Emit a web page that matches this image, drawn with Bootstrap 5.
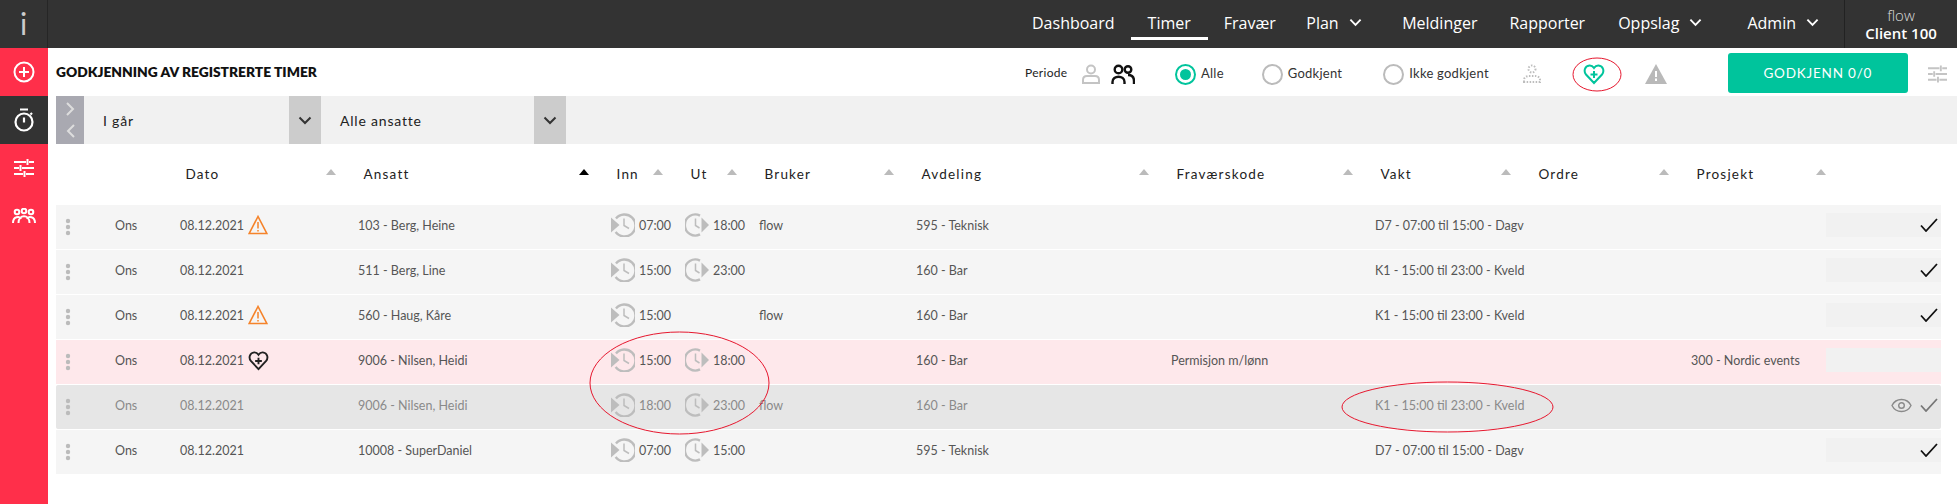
<!DOCTYPE html>
<html lang="no">
<head>
<meta charset="utf-8">
<title>Godkjenning</title>
<link href="https://cdn.jsdelivr.net/npm/bootstrap@5.3.0/dist/css/bootstrap.min.css" rel="stylesheet">
<style>
html,body{height:100%;overflow:hidden}
body{font-family:"Lato","Liberation Sans",sans-serif;font-size:13px;color:#555;background:#fff}
.topbar{height:48px;background:#333}
.logo-box{width:48px;border-right:1px solid #262626;color:#ccc;font-size:30px;font-weight:400;line-height:46px;text-align:center}
.menu-link{display:flex;align-items:center;height:40px;padding:5px 14px 0;color:#fff;font-family:"Open Sans",sans-serif;font-size:16px;text-decoration:none;white-space:nowrap}
.menu-link.wide-link{padding-left:16px;padding-right:16px}
.menu-link.active-link{border-bottom:3px solid #fff;padding:8px 17px 0;margin:0 2px 0 0}
.menu-link.fra-link{padding-right:16.5px}
.menu-link.plan-link{padding-right:24.5px}
.menu-link.rap-link{padding-right:19px}
.menu-link.opp-link{padding-right:31px}
.menu-link.last-sub{padding-right:25px}
.menu-link svg{margin-left:10px}
.client-box{width:113px;border-left:1px solid #222;color:#fff;font-family:"Open Sans",sans-serif;text-align:center;line-height:18px;font-size:15px;padding-top:6px}
.client-box .flow-name{font-weight:300;color:#ddd}
.client-box .client-name{font-weight:600;white-space:nowrap}
.body-wrap{height:456px}
.sidenav{width:48px;background:#ff2f4a}
.side-item{height:48px;display:flex;align-items:center;justify-content:center}
.side-item.current{background:#333}
.main-area{width:1909px;padding-left:8px}
.tool-row{height:48px}
.tool-row>:not(.page-title){margin-top:4px}
.tool-row>.btn-approve,.tool-row>.periode{margin-top:2px}
.page-title{font-size:13.8px;font-weight:800;color:#111;width:969px;margin:0;white-space:nowrap}
.periode{font-size:12px;color:#222;width:57px;letter-spacing:.3px}
.tool-radio{display:flex;align-items:center;font-size:13px;color:#333;letter-spacing:.25px}
.radio-mark{width:21px;height:21px;border-radius:50%;border:2px solid #bbb;margin-right:5px;background:#fff}
.radio-mark.on{border-color:#00c49c;position:relative}
.radio-mark.on::after{content:"";position:absolute;inset:3px;border-radius:50%;background:#00c49c}
.ms-alle{margin-left:40px}.ms-god{margin-left:38px}.ms-ikke{margin-left:41px}
.ms-dot{margin-left:34px}.ms-heart{margin-left:42px}.ms-tri{margin-left:40px}
.ms-btn{margin-left:61px}.ms-sl{margin-left:20px}
.ms-grp{margin-left:11px}
.btn-approve{width:180px;height:40px;background:#00c49c;border:0;border-radius:3px;color:#fff;font-size:13.5px;font-weight:400;letter-spacing:.8px;padding:0}
.btn-approve:hover{background:#00c49c;color:#fff}
.filter-row{height:48px;background:#f1f1f1}
.pager{width:28px;background:#a9a9b1}
.sel-text{display:flex;align-items:center;color:#222;font-size:14px;letter-spacing:.8px}
.sel-a{width:205px;padding-left:19px}.sel-b{width:213px;padding-left:19px}
.sel-arrow{width:32px;background:#ccc;display:flex;align-items:center;justify-content:center}
.grid-row{display:grid;grid-template-columns:59px 65px 178px 253px 74px 74px 157px 255px 204px 158px 158px 135px 115px;width:1885px;align-items:center}
.head-row{height:61px;color:#222;font-size:13.5px;letter-spacing:1.2px}
.head-cell{display:flex;justify-content:space-between;padding-left:5.5px;padding-right:22px;align-items:center}
.head-cell.no-pad{padding-right:0}
.tri{width:0;height:0;border-left:5px solid transparent;border-right:5px solid transparent;border-bottom:6px solid #bbb;margin-bottom:6px;flex:none}
.tri.on{border-bottom-color:#000}
.data-row{height:44px;margin-bottom:1px;background:#f5f5f5;padding-bottom:4px;font-size:12.5px;white-space:nowrap}
.data-row>div{padding-top:2px}
.data-row.pink{background:#fee8eb}
.data-row.dim{background:#e6e6e6;color:#8a8a8a;border-radius:2px}
.data-row>.handle{padding-left:9px;padding-top:4px;display:flex}
.date-cell{display:flex;align-items:center;gap:4px}
.time-cell{display:flex;align-items:center;gap:4px}
.date-cell svg,.time-cell svg{margin-top:-2px}
.data-row>.act-cell{height:24px;padding-top:0;background:#f1f1f1;display:flex;align-items:center;justify-content:flex-end;padding-right:3px}
.data-row>.act-cell.bare{background:transparent;gap:8px}
.draw-layer{position:absolute;left:0;top:0;width:1957px;height:504px;pointer-events:none}
</style>
</head>
<body>
<svg class="d-none">
<symbol id="ic-in" viewBox="0 0 24 24"><path d="M5 5.500A11 11 0 1 1 4.600 19" fill="none" stroke="#bdbdbd" stroke-width="2.400"/><path d="M0 4.500 8.500 12 0 19.500z" fill="#bdbdbd"/><path d="M13 5.500v7l5 3" fill="none" stroke="#bdbdbd" stroke-width="1.500"/></symbol>
<symbol id="ic-out" viewBox="0 0 24 24"><path d="M15 2.600A10.500 10.500 0 1 0 15 21.400" fill="none" stroke="#bdbdbd" stroke-width="2.400"/><path d="M16.500 4.500 24 12l-7.500 7.500z" fill="#bdbdbd"/><path d="M10.500 5.500v7l4 2.500" fill="none" stroke="#bdbdbd" stroke-width="1.500"/></symbol>
<symbol id="ic-warn" viewBox="0 0 20 20"><path d="M10 1.500 1.200 18.500h17.600z" fill="none" stroke="#f5832a" stroke-width="1.600"/><path d="M10 7v6.500M10 15v1.500" stroke="#f5832a" stroke-width="1.500"/></symbol>
<symbol id="ic-dots" viewBox="0 0 6 18"><circle cx="3" cy="3" r="2.200" fill="#bbb"/><circle cx="3" cy="9" r="2.200" fill="#bbb"/><circle cx="3" cy="15" r="2.200" fill="#bbb"/></symbol>
<symbol id="ic-check" viewBox="0 0 18 14"><path d="M1 7.500 6 13 17 1" fill="none" stroke="#111" stroke-width="1.800"/></symbol>
<symbol id="ic-chev" viewBox="0 0 14 9"><path d="M1.500 1.500 7 7l5.500-5.500" fill="none" stroke="currentColor" stroke-width="2"/></symbol>
<symbol id="ic-heart" viewBox="0 0 22 22"><path d="M11 20 3 11.500C.5 8.500 1.500 3 6.500 2.500 8.500 2.400 10 3.500 11 5c1-1.500 2.500-2.600 4.500-2.500 5 .5 6 6 3.500 9z" fill="none" stroke="currentColor" stroke-width="2"/><path d="M11 8v7M7.500 11.500h7" stroke="currentColor" stroke-width="2"/></symbol>
</svg>

<header class="topbar d-flex">
  <div class="logo-box">i</div>
  <nav class="d-flex ms-auto">
    <a class="menu-link wide-link" href="#">Dashboard</a>
    <a class="menu-link active-link" href="#">Timer</a>
    <a class="menu-link fra-link" href="#">Fravær</a>
    <a class="menu-link plan-link" href="#">Plan<svg width="13" height="9"><use href="#ic-chev"/></svg></a>
    <a class="menu-link wide-link" href="#">Meldinger</a>
    <a class="menu-link wide-link rap-link" href="#">Rapporter</a>
    <a class="menu-link opp-link" href="#">Oppslag<svg width="13" height="9"><use href="#ic-chev"/></svg></a>
    <a class="menu-link last-sub" href="#">Admin<svg width="13" height="9"><use href="#ic-chev"/></svg></a>
  </nav>
  <div class="client-box"><div class="flow-name">flow</div><div class="client-name">Client 100</div></div>
</header>

<div class="body-wrap d-flex">
  <aside class="sidenav">
    <div class="side-item"><svg width="22" height="22" viewBox="0 0 22 22" fill="none" stroke="#fff" stroke-width="2"><circle cx="11" cy="11" r="9.500"/><path d="M11 6v10M6 11h10"/></svg></div>
    <div class="side-item current"><svg width="20" height="24" viewBox="0 0 20 24" fill="none" stroke="#fff" stroke-width="2.200"><circle cx="10" cy="14" r="8.500"/><path d="M6 1.500h8M10 9.500v5M16.500 5l1.500 1.500"/></svg></div>
    <div class="side-item"><svg width="20" height="18" viewBox="0 0 20 18" fill="none" stroke="#fff" stroke-width="2"><path d="M0 3h12M15 3h5M0 9h5M8 9h12M0 15h9M12 15h8M13.500 0v6M6.500 6v6M10.500 12v6"/></svg></div>
    <div class="side-item"><svg width="24" height="16" viewBox="0 0 24 16" fill="none" stroke="#fff" stroke-width="2"><circle cx="5" cy="4" r="2.300"/><circle cx="12" cy="3" r="2.300"/><circle cx="19" cy="4" r="2.300"/><path d="M1 15c0-7 7-7 8-4M23 15c0-7-7-7-8-4M6.500 15c0-9 11-9 11 0"/></svg></div>
  </aside>

  <main class="main-area">
    <div class="tool-row d-flex align-items-center">
      <h1 class="page-title">GODKJENNING AV REGISTRERTE TIMER</h1>
      <span class="periode">Periode</span>
      <svg width="18" height="20" viewBox="0 0 18 20" fill="none" stroke="#c4c4c4" stroke-width="2"><circle cx="9" cy="5.500" r="4"/><path d="M1 19v-3c0-3 2-4 4-4h8c2 0 4 1 4 4v3z"/></svg>
      <svg class="ms-grp" width="24" height="20" viewBox="0 0 24 20" fill="none" stroke="#111" stroke-width="2.400"><circle cx="7.500" cy="5.500" r="3.800"/><circle cx="17" cy="5.500" r="3.300"/><path d="M1.500 20v-2c0-7 12-7 12 0v2M17 11c4 0 6 2.500 6 6v3"/></svg>
      <label class="tool-radio ms-alle"><span class="radio-mark on"></span>Alle</label>
      <label class="tool-radio ms-god"><span class="radio-mark"></span>Godkjent</label>
      <label class="tool-radio ms-ikke"><span class="radio-mark"></span>Ikke godkjent</label>
      <svg class="ms-dot" width="18" height="20" viewBox="0 0 18 20" fill="none" stroke="#bdbdbd" stroke-width="2" stroke-dasharray="1.500 1.500"><circle cx="9" cy="5" r="3.500"/><path d="M1 18v-2c0-3 3-4 5-4h6c2 0 5 1 5 4v2z"/></svg>
      <svg class="ms-heart" width="22" height="22" style="color:#00c49c"><use href="#ic-heart"/></svg>
      <svg class="ms-tri" width="22" height="20" viewBox="0 0 22 20"><path d="M11 0 22 20H0z" fill="#b9b9b9"/><path d="M11 7v6M11 14.500v2.500" stroke="#fff" stroke-width="2"/></svg>
      <button class="btn btn-approve ms-btn" type="button">GODKJENN 0/0</button>
      <svg class="ms-sl" width="19" height="18" viewBox="0 0 20 18" fill="none" stroke="#c4c4c4" stroke-width="2"><path d="M0 3h12M15 3h5M0 9h5M8 9h12M0 15h9M12 15h8M13.500 0v6M6.500 6v6M10.500 12v6"/></svg>
    </div>

    <div class="filter-row d-flex">
      <div class="pager d-flex flex-column align-items-center justify-content-center gap-2">
        <svg width="9" height="14" viewBox="0 0 9 14" fill="none" stroke="#ddd" stroke-width="2"><path d="M1 1l6 6-6 6"/></svg>
        <svg width="9" height="14" viewBox="0 0 9 14" fill="none" stroke="#ddd" stroke-width="2"><path d="M8 1 2 7l6 6"/></svg>
      </div>
      <div class="sel-text sel-a">I går</div>
      <div class="sel-arrow"><svg width="14" height="9" style="color:#333"><use href="#ic-chev"/></svg></div>
      <div class="sel-text sel-b">Alle ansatte</div>
      <div class="sel-arrow"><svg width="14" height="9" style="color:#333"><use href="#ic-chev"/></svg></div>
    </div>

    <div class="grid-row head-row">
      <div></div><div></div>
      <div class="head-cell"><span>Dato</span><i class="tri"></i></div>
      <div class="head-cell"><span>Ansatt</span><i class="tri on"></i></div>
      <div class="head-cell"><span>Inn</span><i class="tri"></i></div>
      <div class="head-cell"><span>Ut</span><i class="tri"></i></div>
      <div class="head-cell"><span>Bruker</span><i class="tri"></i></div>
      <div class="head-cell"><span>Avdeling</span><i class="tri"></i></div>
      <div class="head-cell"><span>Fraværskode</span><i class="tri"></i></div>
      <div class="head-cell"><span>Vakt</span><i class="tri"></i></div>
      <div class="head-cell"><span>Ordre</span><i class="tri"></i></div>
      <div class="head-cell no-pad"><span>Prosjekt</span><i class="tri"></i></div>
      <div></div>
    </div>

    <div class="grid-row data-row">
      <div class="handle"><svg width="6" height="18"><use href="#ic-dots"/></svg></div><div>Ons</div>
      <div class="date-cell">08.12.2021<svg width="20" height="20"><use href="#ic-warn"/></svg></div>
      <div>103 - Berg, Heine</div>
      <div class="time-cell"><svg width="24" height="24"><use href="#ic-in"/></svg>07:00</div>
      <div class="time-cell"><svg width="24" height="24"><use href="#ic-out"/></svg>18:00</div>
      <div>flow</div><div>595 - Teknisk</div><div></div><div>D7 - 07:00 til 15:00 - Dagv</div><div></div><div></div>
      <div class="act-cell"><svg width="18" height="14"><use href="#ic-check"/></svg></div>
    </div>
    <div class="grid-row data-row">
      <div class="handle"><svg width="6" height="18"><use href="#ic-dots"/></svg></div><div>Ons</div>
      <div class="date-cell">08.12.2021</div>
      <div>511 - Berg, Line</div>
      <div class="time-cell"><svg width="24" height="24"><use href="#ic-in"/></svg>15:00</div>
      <div class="time-cell"><svg width="24" height="24"><use href="#ic-out"/></svg>23:00</div>
      <div></div><div>160 - Bar</div><div></div><div>K1 - 15:00 til 23:00 - Kveld</div><div></div><div></div>
      <div class="act-cell"><svg width="18" height="14"><use href="#ic-check"/></svg></div>
    </div>
    <div class="grid-row data-row">
      <div class="handle"><svg width="6" height="18"><use href="#ic-dots"/></svg></div><div>Ons</div>
      <div class="date-cell">08.12.2021<svg width="20" height="20"><use href="#ic-warn"/></svg></div>
      <div>560 - Haug, Kåre</div>
      <div class="time-cell"><svg width="24" height="24"><use href="#ic-in"/></svg>15:00</div>
      <div></div>
      <div>flow</div><div>160 - Bar</div><div></div><div>K1 - 15:00 til 23:00 - Kveld</div><div></div><div></div>
      <div class="act-cell"><svg width="18" height="14"><use href="#ic-check"/></svg></div>
    </div>
    <div class="grid-row data-row pink">
      <div class="handle"><svg width="6" height="18"><use href="#ic-dots"/></svg></div><div>Ons</div>
      <div class="date-cell">08.12.2021<svg width="21" height="21" style="color:#222"><use href="#ic-heart"/></svg></div>
      <div>9006 - Nilsen, Heidi</div>
      <div class="time-cell"><svg width="24" height="24"><use href="#ic-in"/></svg>15:00</div>
      <div class="time-cell"><svg width="24" height="24"><use href="#ic-out"/></svg>18:00</div>
      <div></div><div>160 - Bar</div><div>Permisjon m/lønn</div><div></div><div></div><div>300 - Nordic events</div>
      <div class="act-cell"></div>
    </div>
    <div class="grid-row data-row dim">
      <div class="handle"><svg width="6" height="18"><use href="#ic-dots"/></svg></div><div>Ons</div>
      <div class="date-cell">08.12.2021</div>
      <div>9006 - Nilsen, Heidi</div>
      <div class="time-cell"><svg width="24" height="24"><use href="#ic-in"/></svg>18:00</div>
      <div class="time-cell"><svg width="24" height="24"><use href="#ic-out"/></svg>23:00</div>
      <div>flow</div><div>160 - Bar</div><div></div><div>K1 - 15:00 til 23:00 - Kveld</div><div></div><div></div>
      <div class="act-cell bare">
        <svg width="21" height="15" viewBox="0 0 21 15" fill="none" stroke="#8a8a8a" stroke-width="1.400"><path d="M1 7.500C5-.5 16-.5 20 7.500 16 15.500 5 15.500 1 7.500z"/><circle cx="10.500" cy="7.500" r="2.800"/></svg>
        <svg width="18" height="14" viewBox="0 0 18 14"><path d="M1 7.500 6 13 17 1" fill="none" stroke="#777" stroke-width="1.800"/></svg>
      </div>
    </div>
    <div class="grid-row data-row">
      <div class="handle"><svg width="6" height="18"><use href="#ic-dots"/></svg></div><div>Ons</div>
      <div class="date-cell">08.12.2021</div>
      <div>10008 - SuperDaniel</div>
      <div class="time-cell"><svg width="24" height="24"><use href="#ic-in"/></svg>07:00</div>
      <div class="time-cell"><svg width="24" height="24"><use href="#ic-out"/></svg>15:00</div>
      <div></div><div>595 - Teknisk</div><div></div><div>D7 - 07:00 til 15:00 - Dagv</div><div></div><div></div>
      <div class="act-cell"><svg width="18" height="14"><use href="#ic-check"/></svg></div>
    </div>
  </main>
</div>

<svg class="draw-layer" viewBox="0 0 1957 504" fill="none" stroke="#e6172e" stroke-width="1">
  <ellipse cx="1597" cy="74.500" rx="24" ry="16.500"/>
  <ellipse cx="679.500" cy="383" rx="89.500" ry="51"/>
  <ellipse cx="1447.500" cy="407" rx="105.500" ry="25"/>
</svg>
<script src="https://cdn.jsdelivr.net/npm/bootstrap@5.3.0/dist/js/bootstrap.bundle.min.js"></script>
</body>
</html>
